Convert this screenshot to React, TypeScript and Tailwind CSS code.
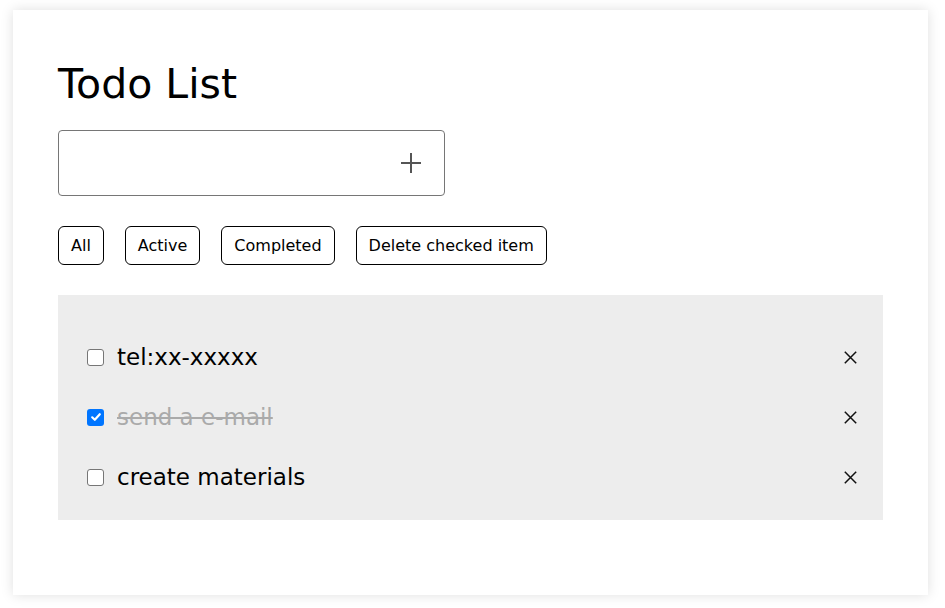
import React from "react";

const items = [
  { text: "tel:xx-xxxxx", done: false },
  { text: "send a e-mail", done: true },
  { text: "create materials", done: false },
];

function Box({ checked }: { checked: boolean }) {
  if (checked) {
    return (
      <span className="flex h-[17px] w-[17px] items-center justify-center rounded-[3px] bg-[#0075ff]">
        <svg width="12" height="12" viewBox="0 0 12 12">
          <path d="M2.2 6.3 L4.8 8.8 L9.8 3.2" stroke="white" strokeWidth="2.2" fill="none" strokeLinecap="round" strokeLinejoin="round" />
        </svg>
      </span>
    );
  }
  return <span className="block h-[17px] w-[17px] rounded-[3px] border-[1.5px] border-[#767676] bg-white" />;
}

export default function App() {
  return (
    <div className="min-h-[608px] w-[945px] bg-white pl-[13px] pt-[10px]" style={{ fontFamily: '"DejaVu Sans", sans-serif' }}>
      <div className="h-[585px] w-[915px] bg-white px-[45px] pt-[52px] shadow-[0_0_12px_rgba(0,0,0,0.13)]">
        <h1 className="text-[41px] leading-[44px] text-black">Todo List</h1>
        <div className="mt-[24px] flex h-[66px] w-[387px] items-center justify-end rounded-[4px] border border-[#767676] pr-[22px]">
          <svg width="22" height="22" viewBox="0 0 22 22">
            <path d="M11 1 V21 M1 11 H21" stroke="#555" strokeWidth="2" />
          </svg>
        </div>
        <div className="mt-[30px] flex gap-[21px]">
          {["All", "Active", "Completed", "Delete checked item"].map((b) => (
            <button key={b} className="h-[39px] rounded-[6px] border border-black bg-white px-[12px] text-[16px] text-black">
              {b}
            </button>
          ))}
        </div>
        <div className="mt-[30px] flex w-[825px] flex-col bg-[#ededed] pb-[13px] pl-[29px] pr-[26px] pt-[32px]">
          {items.map((it) => (
            <div key={it.text} className="flex h-[60px] items-center">
              <Box checked={it.done} />
              <span className={"ml-[13px] flex-1 text-[23px] " + (it.done ? "text-[#aaaaaa] line-through" : "text-black")}>
                {it.text}
              </span>
              <svg width="13" height="13" viewBox="0 0 13 13">
                <path d="M0.8 0.8 L12.2 12.2 M12.2 0.8 L0.8 12.2" stroke="#111" strokeWidth="1.5" />
              </svg>
            </div>
          ))}
        </div>
      </div>
    </div>
  );
}
